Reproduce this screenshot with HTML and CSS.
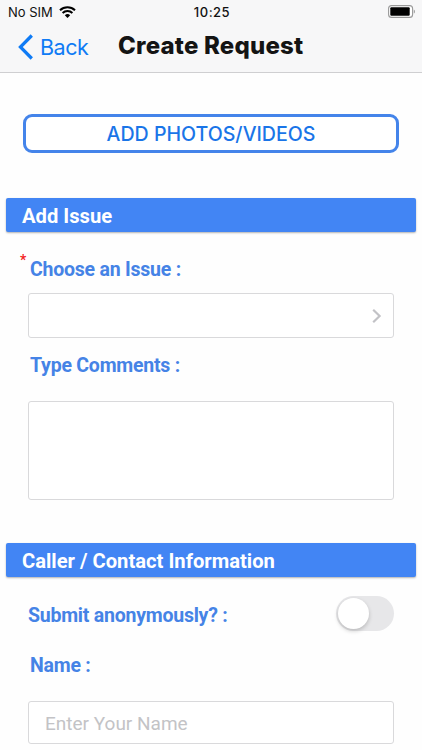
FILE: index.html
```html
<!DOCTYPE html>
<html lang="en">
<head>
  <meta charset="UTF-8">
  <meta name="viewport" content="width=device-width, initial-scale=1.0">
  <title>Create Request</title>
  <link rel="stylesheet" href="styles.css">
</head>
<body>
  <header class="header">
    <div class="status-bar">
      <div class="carrier">
        <span>No SIM</span>
        <svg class="wifi" width="17" height="12" viewBox="0 0 17 12">
          <path d="M1 4.3a10.8 10.8 0 0 1 15 0M3.6 7a7 7 0 0 1 9.8 0" fill="none" stroke="#000" stroke-width="2"/>
          <path d="M8.5 12L5.8 9.3a3.9 3.9 0 0 1 5.4 0z"/>
        </svg>
      </div>
      <span class="time">10:25</span>
      <svg class="battery" width="28" height="13" viewBox="0 0 28 13">
        <rect x="0.6" y="0.6" width="24" height="11.8" rx="3" fill="#fff" stroke="#999" stroke-width="1.1"/>
        <rect x="2.3" y="2.3" width="19.4" height="8.4" rx="1"/>
        <path d="M25.8 4.4v4.2c1.5-.6 1.5-3.6 0-4.2z" fill="#999"/>
      </svg>
    </div>
    <div class="nav-bar">
      <a class="back" href="#">
        <svg width="16" height="26" viewBox="0 0 16 26">
          <path d="M13.8 1.5L2.4 13l11.4 11.5" fill="none" stroke="#0f7bf5" stroke-width="3.2"/>
        </svg>
        <span>Back</span>
      </a>
      <h1>Create Request</h1>
    </div>
  </header>

  <form class="request-form">
    <button type="button" class="add-media">ADD PHOTOS/VIDEOS</button>

    <h2 class="section-title">Add Issue</h2>
    <div class="fields">
      <label class="field-label required"><span class="star">*</span>Choose an Issue :</label>
      <div class="box select-box">
        <svg width="10" height="16" viewBox="0 0 10 16">
          <path d="M1.2 1.8L7.6 8l-6.4 6.2" fill="none" stroke="#c2c2c6" stroke-width="2.2"/>
        </svg>
      </div>
      <label class="field-label" for="comments">Type Comments :</label>
      <textarea class="box comments" id="comments"></textarea>
    </div>

    <h2 class="section-title">Caller / Contact Information</h2>
    <div class="fields">
      <div class="toggle-row">
        <span class="toggle-label">Submit anonymously? :</span>
        <span class="toggle"><span class="knob"></span></span>
      </div>
      <label class="field-label" for="name">Name :</label>
      <input class="box name-input" id="name" type="text" placeholder="Enter Your Name">
    </div>
  </form>
</body>
</html>
```

FILE: styles.css
```css
* {
  box-sizing: border-box;
}

body {
  margin: 0;
  height: 750px;
  overflow: hidden;
  background-color: #fefefe;
  font-family: Roboto, sans-serif;
}

/* Header */

.header {
  height: 73px;
  background-color: #f7f7f8;
  border-bottom: 1px solid #cfcfd1;
  font-family: Inter, sans-serif;
}

.status-bar {
  display: grid;
  grid-template-columns: 1fr auto 1fr;
  align-items: center;
  height: 23px;
  padding: 0 6px 0 8px;
  font-size: 13px;
  color: #111;
}

.carrier {
  display: flex;
  align-items: center;
  gap: 6px;
}

.time {
  font-weight: 500;
  letter-spacing: 0.5px;
}

.battery {
  justify-self: end;
}

.nav-bar {
  display: flex;
  align-items: center;
  height: 48px;
  padding-left: 18px;
}

.back {
  display: flex;
  align-items: center;
  gap: 6px;
  width: 100px;
  font-size: 21.5px;
  letter-spacing: -0.5px;
  color: #0f7bf5;
  text-decoration: none;
}

h1 {
  margin: 0;
  padding-bottom: 3px;
  font-size: 24px;
  font-weight: 800;
  letter-spacing: 0.2px;
  color: #141414;
  white-space: nowrap;
}

/* Form */

.request-form {
  display: flex;
  flex-direction: column;
  padding: 41px 6px 0;
}

.add-media {
  height: 39px;
  margin: 0 17px 45px;
  padding: 1px 0 0;
  background-color: #fff;
  border: 3px solid #4484ea;
  border-radius: 9px;
  font-family: Inter, sans-serif;
  font-size: 19.6px;
  font-weight: 500;
  color: #1a75e8;
}

.section-title {
  height: 34px;
  margin: 0;
  padding-left: 16px;
  background-color: #4285f4;
  border-radius: 2px;
  box-shadow: 0 1px 2px rgba(0, 0, 0, 0.3);
  font-size: 20.2px;
  font-weight: 700;
  line-height: 36px;
  color: #fff;
}

.fields {
  display: flex;
  flex-direction: column;
  padding: 0 22px;
}

.field-label,
.toggle-label {
  font-size: 19.5px;
  font-weight: 700;
  line-height: 24px;
  letter-spacing: -0.23px;
  color: #4583e6;
}

.field-label {
  padding-left: 2px;
}

.required {
  position: relative;
  margin: 26px 0 11px;
}

.star {
  position: absolute;
  left: -8px;
  top: -10px;
  font-size: 14px;
  font-weight: 600;
  color: #f32121;
}

.box {
  width: 100%;
  background-color: #fff;
  border: 1px solid #d9d9db;
  border-radius: 3px;
  font-family: Roboto, sans-serif;
  font-size: 19px;
}

.select-box {
  display: flex;
  align-items: center;
  justify-content: flex-end;
  height: 45px;
  margin-bottom: 16px;
  padding-right: 11px;
}

.comments {
  height: 99px;
  margin: 23px 0 43px;
  resize: none;
}

.toggle-row {
  display: flex;
  align-items: center;
  justify-content: space-between;
  margin: 19px 0 23px;
}

.toggle-label {
  padding-top: 4px;
}

.toggle {
  width: 58px;
  height: 35px;
  padding: 2px;
  background-color: #e7e7e9;
  border-radius: 18px;
}

.knob {
  display: block;
  width: 31px;
  height: 31px;
  background-color: #fff;
  border-radius: 50%;
  box-shadow: 0 2px 4px rgba(0, 0, 0, 0.2);
}

.name-input {
  height: 43px;
  margin-top: 23px;
  padding: 2px 16px 0;
}

.name-input::placeholder {
  color: #c3c3c6;
}
```
